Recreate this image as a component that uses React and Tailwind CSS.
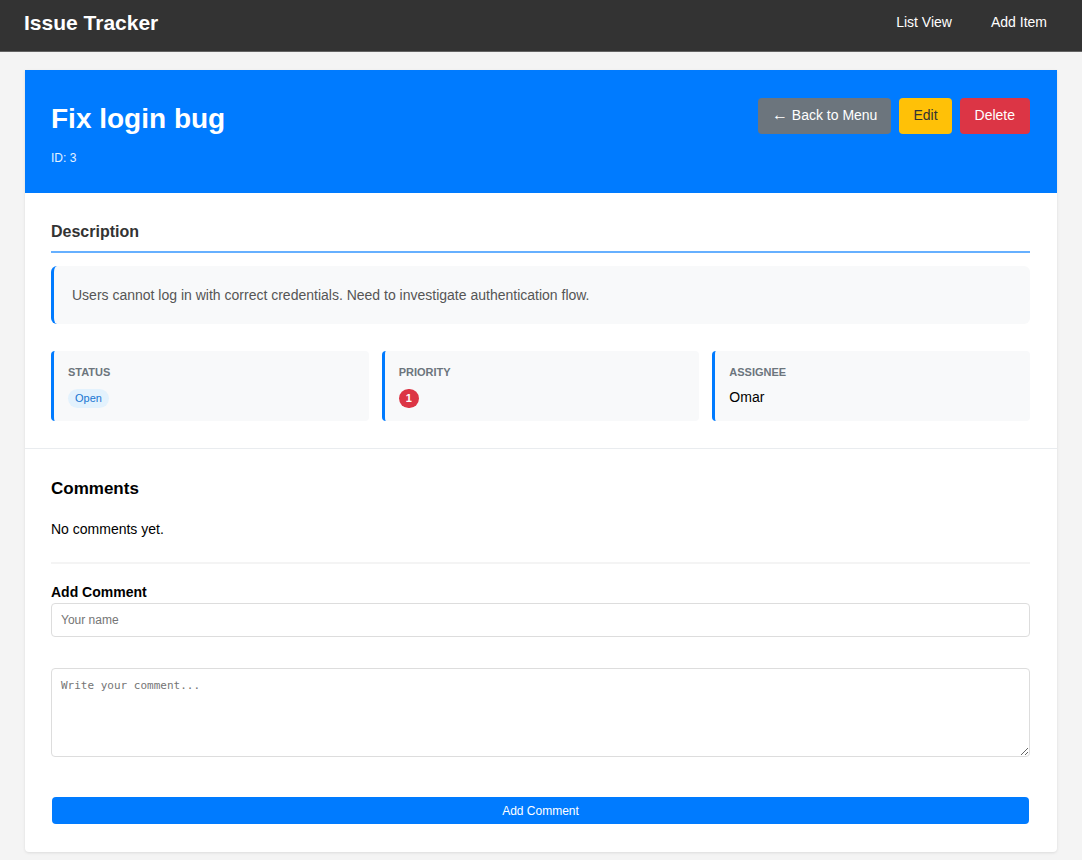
import React from "react";

const fields = [
  {
    label: "Status",
    value: (
      <span className="flex h-[19px] items-center rounded-full bg-[#e3f2fd] px-[7px] text-[11px] text-[#1976d2]">
        Open
      </span>
    ),
  },
  {
    label: "Priority",
    value: (
      <span className="flex h-[19px] items-center rounded-full bg-[#dc3545] px-[7px] text-[11px] font-bold text-white">
        1
      </span>
    ),
  },
  { label: "Assignee", value: <span className="text-sm leading-4 text-black">Omar</span> },
];

function NavBar() {
  return (
    <header className="flex items-start justify-between border-b border-[#636363] bg-[#333] pt-2.5 pr-[35px] pb-[15px] pl-6 text-white">
      <div className="text-[21px] leading-[26px] font-bold">Issue Tracker</div>
      <nav className="flex gap-[39px] text-sm leading-6">
        <a href="#list">List View</a>
        <a href="#add">Add Item</a>
      </nav>
    </header>
  );
}

function IssueHeader() {
  return (
    <div className="flex items-start justify-between bg-[#007bff] pt-7 pr-[27px] pb-[27px] pl-[26px] text-white">
      <div>
        <h1 className="text-[28px] leading-[42px] font-bold">Fix login bug</h1>
        <p className="mt-2.5 text-xs leading-4 text-white/90">ID: 3</p>
      </div>
      <div className="flex gap-2 text-sm">
        <button type="button" className="h-9 rounded bg-[#6c757d] px-3.5 pb-0.5">
          <span className="text-base leading-5">←</span> Back to Menu
        </button>
        <button type="button" className="h-9 rounded bg-[#ffc107] px-3.5 pb-0.5 text-[#333]">
          Edit
        </button>
        <button type="button" className="h-9 rounded bg-[#dc3545] px-[15px] pb-0.5">
          Delete
        </button>
      </div>
    </div>
  );
}

function Details() {
  return (
    <section className="border-b border-[#e9ecef] pt-[26px] pr-[27px] pb-[27px] pl-[26px]">
      <h2 className="border-b-2 border-[#66b0ff] pb-1.5 text-base leading-[26px] font-bold text-[#333]">
        Description
      </h2>
      <p className="mt-[13px] rounded-md border-l-[3px] border-[#007bff] bg-[#f8f9fa] px-[18px] py-[18px] text-sm leading-[22px] text-[#555]">
        Users cannot log in with correct credentials. Need to investigate authentication flow.
      </p>
      <dl className="mt-[27px] grid grid-cols-3 gap-[13px]">
        {fields.map((field) => (
          <div
            key={field.label}
            className="h-[70px] rounded border-l-[3px] border-[#007bff] bg-[#f8f9fa] px-3.5 pt-3.5"
          >
            <dt className="text-[11px] leading-[14px] font-bold text-[#6c757d] uppercase">
              {field.label}
            </dt>
            <dd className="mt-2.5 flex">{field.value}</dd>
          </div>
        ))}
      </dl>
    </section>
  );
}

function Comments() {
  return (
    <section className="pt-[27px] pr-[27px] pb-7 pl-[26px] text-black">
      <h2 className="text-[17px] leading-[26px] font-bold">Comments</h2>
      <p className="mt-[15px] text-sm leading-6">No comments yet.</p>
      <form className="mt-[21px] flex flex-col border-t-2 border-[#f4f4f4] pt-[17px]">
        <h3 className="text-sm leading-[22px] font-bold">Add Comment</h3>
        <input
          type="text"
          aria-label="Your name"
          placeholder="Your name"
          className="h-[34px] rounded border border-[#ddd] bg-white px-[9px] text-xs placeholder:text-[#757575]"
        />
        <textarea
          aria-label="Comment"
          placeholder="Write your comment..."
          className="mt-[31px] h-[89px] resize-y rounded border border-[#ddd] bg-white px-[9px] py-[9px] font-['DejaVu_Sans_Mono',monospace] text-[11px] leading-4 placeholder:text-[#757575]"
        />
        <button
          type="submit"
          className="mx-px mt-10 h-[27px] rounded bg-[#007bff] text-xs text-white"
        >
          Add Comment
        </button>
      </form>
    </section>
  );
}

export default function App() {
  return (
    <div className="min-h-screen bg-[#f4f4f4] pb-2 font-['Liberation_Sans',Arial,sans-serif]">
      <NavBar />
      <main className="mx-[25px] mt-[18px] overflow-hidden rounded-b bg-white shadow-[0_1px_3px_rgba(0,0,0,0.1)]">
        <IssueHeader />
        <Details />
        <Comments />
      </main>
    </div>
  );
}
